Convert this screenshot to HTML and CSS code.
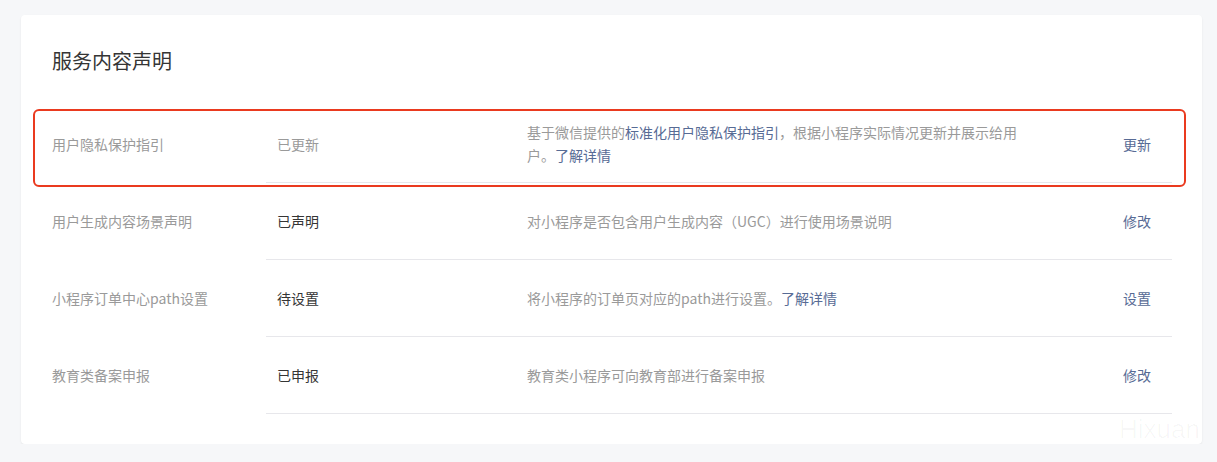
FILE: index.html
```html
<!DOCTYPE html>
<html lang="zh-CN">
<head>
<meta charset="utf-8">
<title>服务内容声明</title>
<link rel="stylesheet" href="styles.css">
</head>
<body>
<div class="page">
  <section class="card">
    <h2 class="title">服务内容声明</h2>
    <div class="rows">
      <div class="row row-highlight">
        <div class="label">用户隐私保护指引</div>
        <div class="cells">
          <div class="status status-muted">已更新</div>
          <div class="desc">基于微信提供的<a class="link">标准化用户隐私保护指引</a>，根据小程序实际情况更新并展示给用户。<a class="link">了解详情</a></div>
          <div class="action"><a class="link">更新</a></div>
        </div>
        <div class="highlight"></div>
      </div>
      <div class="row">
        <div class="label">用户生成内容场景声明</div>
        <div class="cells">
          <div class="status">已声明</div>
          <div class="desc">对小程序是否包含用户生成内容（UGC）进行使用场景说明</div>
          <div class="action"><a class="link">修改</a></div>
        </div>
      </div>
      <div class="row">
        <div class="label">小程序订单中心path设置</div>
        <div class="cells">
          <div class="status">待设置</div>
          <div class="desc">将小程序的订单页对应的path进行设置。<a class="link">了解详情</a></div>
          <div class="action"><a class="link">设置</a></div>
        </div>
      </div>
      <div class="row">
        <div class="label">教育类备案申报</div>
        <div class="cells">
          <div class="status">已申报</div>
          <div class="desc">教育类小程序可向教育部进行备案申报</div>
          <div class="action"><a class="link">修改</a></div>
        </div>
      </div>
    </div>
    <div class="watermark">Hixuan</div>
  </section>
</div>
</body>
</html>
```

FILE: styles.css
```css
* { box-sizing: border-box; }
html, body {
  margin: 0;
  padding: 0;
  background: #f6f7f9;
}
body {
  font-family: "Noto Sans CJK SC", "Noto Sans", sans-serif;
  font-size: 14px;
  color: #353535;
}
.page {
  padding: 15px 15px 0 21px;
}
.card {
  position: relative;
  background: #ffffff;
  border-radius: 4px;
  box-shadow: 0 1px 2px rgba(0, 0, 0, 0.08);
  padding: 32px 30px 30px 31px;
}
.title {
  margin: 0 0 31px 0;
  font-size: 20px;
  line-height: 28px;
  font-weight: normal;
  color: #353535;
}
.row {
  position: relative;
  display: flex;
  align-items: stretch;
}
.label {
  width: 214px;
  flex: none;
  display: flex;
  align-items: center;
  color: #9a9a9a;
  line-height: 23px;
}
.cells {
  flex: 1;
  display: grid;
  grid-template-columns: 250px 596px 1fr;
  align-items: center;
  min-height: 77px;
  border-bottom: 1px solid #e7e7eb;
}
.cells > div {
  padding: 15px 0 15px 11px;
  line-height: 23px;
}
.status { color: #353535; }
.status-muted { color: #9a9a9a; }
.cells > .desc {
  color: #9a9a9a;
  padding-right: 90px;
}
.link {
  color: #576b95;
  text-decoration: none;
  cursor: pointer;
}
.highlight {
  position: absolute;
  left: -19px;
  right: -14px;
  top: 3px;
  bottom: -4px;
  border: 2.5px solid #ea3a1f;
  border-radius: 6px;
  pointer-events: none;
}
.watermark {
  position: absolute;
  right: 2px;
  bottom: 0;
  font-family: "Liberation Sans", sans-serif;
  font-size: 26px;
  line-height: 30px;
  color: rgba(0, 0, 0, 0.03);
}
```
